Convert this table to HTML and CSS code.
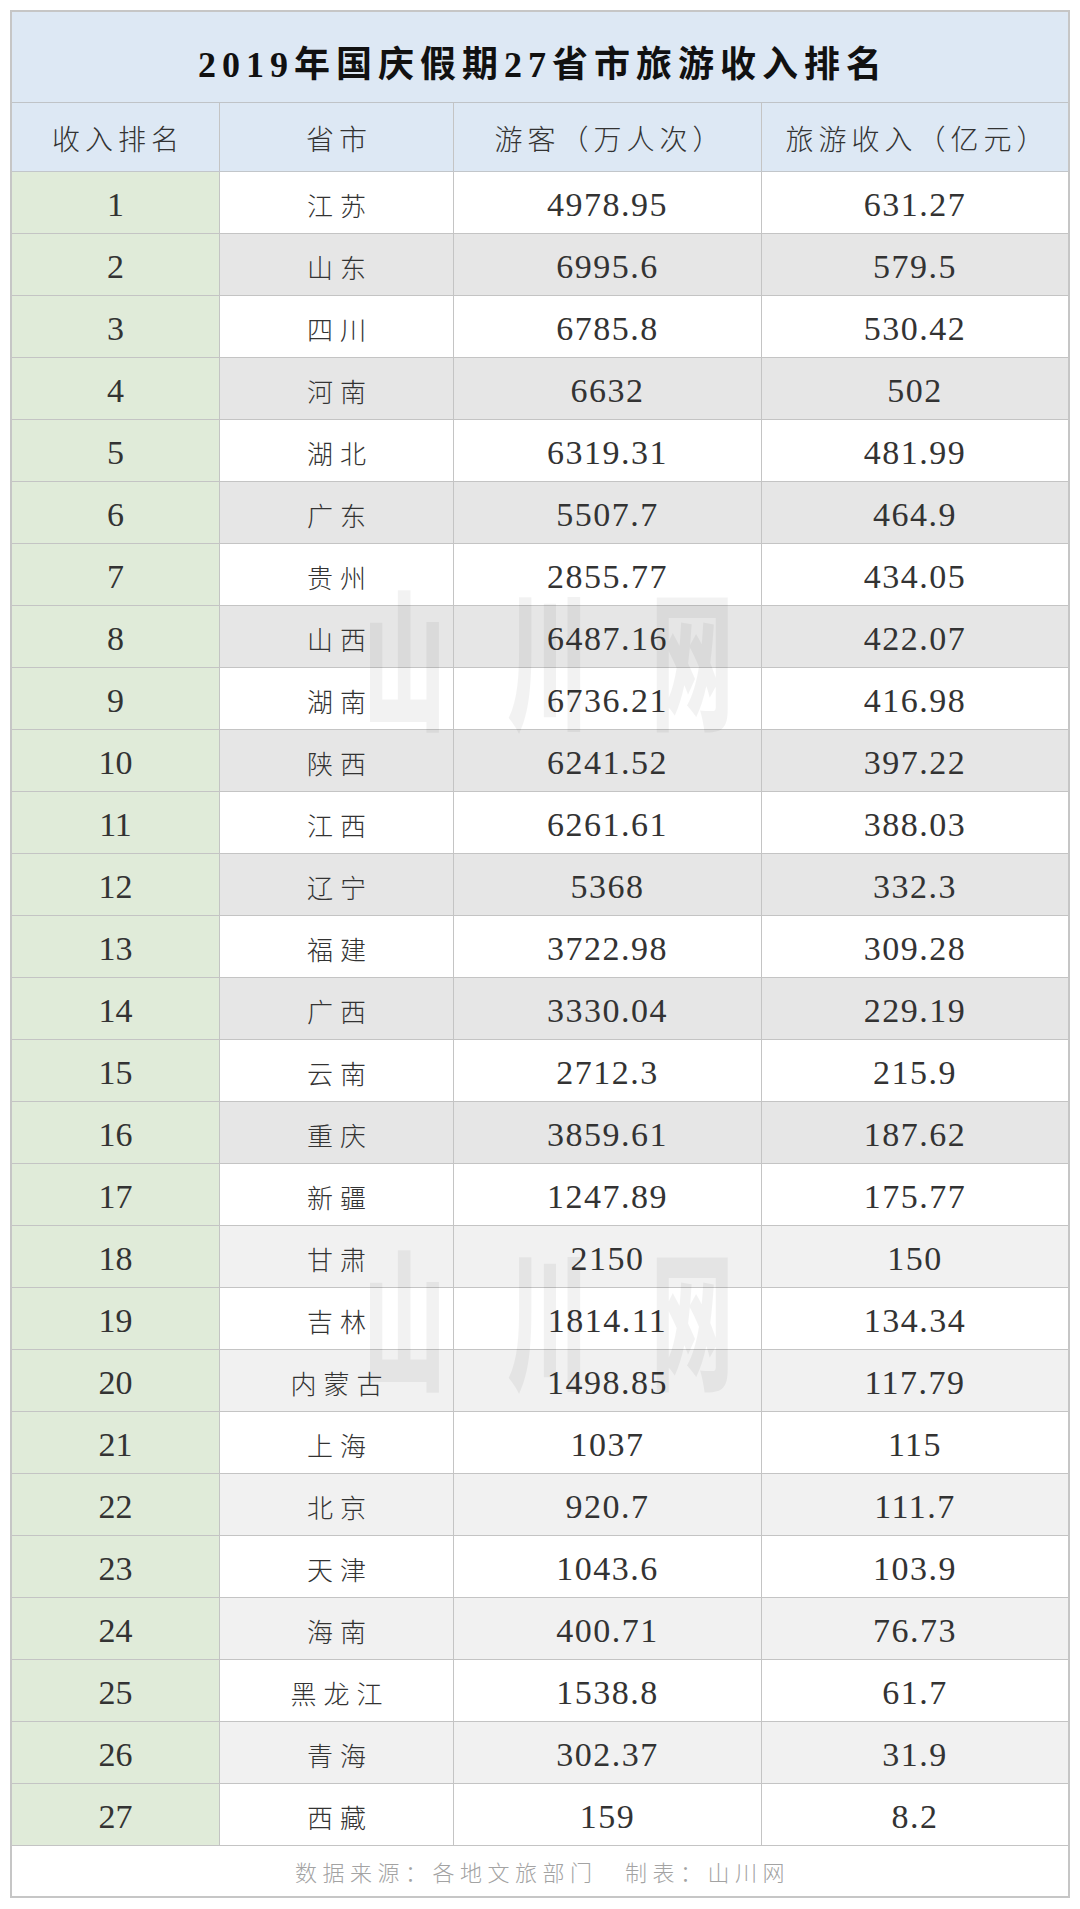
FILE: index.html
```html
<!DOCTYPE html>
<html lang="zh-CN">
<head>
<meta charset="utf-8">
<title>2019年国庆假期27省市旅游收入排名</title>
<link rel="stylesheet" href="styles.css">
</head>
<body>
<div class="sheet">
  <div class="title">2019年国庆假期27省市旅游收入排名</div>
  <div class="row head">
    <div class="cell">收入排名</div>
    <div class="cell">省市</div>
    <div class="cell">游客（万人次）</div>
    <div class="cell">旅游收入（亿元）</div>
  </div>
  <div class="row"><div class="cell rank">1</div><div class="cell prov">江苏</div><div class="cell num">4978.95</div><div class="cell num">631.27</div></div>
  <div class="row dark"><div class="cell rank">2</div><div class="cell prov">山东</div><div class="cell num">6995.6</div><div class="cell num">579.5</div></div>
  <div class="row"><div class="cell rank">3</div><div class="cell prov">四川</div><div class="cell num">6785.8</div><div class="cell num">530.42</div></div>
  <div class="row dark"><div class="cell rank">4</div><div class="cell prov">河南</div><div class="cell num">6632</div><div class="cell num">502</div></div>
  <div class="row"><div class="cell rank">5</div><div class="cell prov">湖北</div><div class="cell num">6319.31</div><div class="cell num">481.99</div></div>
  <div class="row dark"><div class="cell rank">6</div><div class="cell prov">广东</div><div class="cell num">5507.7</div><div class="cell num">464.9</div></div>
  <div class="row"><div class="cell rank">7</div><div class="cell prov">贵州</div><div class="cell num">2855.77</div><div class="cell num">434.05</div></div>
  <div class="row dark"><div class="cell rank">8</div><div class="cell prov">山西</div><div class="cell num">6487.16</div><div class="cell num">422.07</div></div>
  <div class="row"><div class="cell rank">9</div><div class="cell prov">湖南</div><div class="cell num">6736.21</div><div class="cell num">416.98</div></div>
  <div class="row dark"><div class="cell rank">10</div><div class="cell prov">陕西</div><div class="cell num">6241.52</div><div class="cell num">397.22</div></div>
  <div class="row"><div class="cell rank">11</div><div class="cell prov">江西</div><div class="cell num">6261.61</div><div class="cell num">388.03</div></div>
  <div class="row dark"><div class="cell rank">12</div><div class="cell prov">辽宁</div><div class="cell num">5368</div><div class="cell num">332.3</div></div>
  <div class="row"><div class="cell rank">13</div><div class="cell prov">福建</div><div class="cell num">3722.98</div><div class="cell num">309.28</div></div>
  <div class="row dark"><div class="cell rank">14</div><div class="cell prov">广西</div><div class="cell num">3330.04</div><div class="cell num">229.19</div></div>
  <div class="row"><div class="cell rank">15</div><div class="cell prov">云南</div><div class="cell num">2712.3</div><div class="cell num">215.9</div></div>
  <div class="row dark"><div class="cell rank">16</div><div class="cell prov">重庆</div><div class="cell num">3859.61</div><div class="cell num">187.62</div></div>
  <div class="row"><div class="cell rank">17</div><div class="cell prov">新疆</div><div class="cell num">1247.89</div><div class="cell num">175.77</div></div>
  <div class="row light"><div class="cell rank">18</div><div class="cell prov">甘肃</div><div class="cell num">2150</div><div class="cell num">150</div></div>
  <div class="row"><div class="cell rank">19</div><div class="cell prov">吉林</div><div class="cell num">1814.11</div><div class="cell num">134.34</div></div>
  <div class="row light"><div class="cell rank">20</div><div class="cell prov">内蒙古</div><div class="cell num">1498.85</div><div class="cell num">117.79</div></div>
  <div class="row"><div class="cell rank">21</div><div class="cell prov">上海</div><div class="cell num">1037</div><div class="cell num">115</div></div>
  <div class="row light"><div class="cell rank">22</div><div class="cell prov">北京</div><div class="cell num">920.7</div><div class="cell num">111.7</div></div>
  <div class="row"><div class="cell rank">23</div><div class="cell prov">天津</div><div class="cell num">1043.6</div><div class="cell num">103.9</div></div>
  <div class="row light"><div class="cell rank">24</div><div class="cell prov">海南</div><div class="cell num">400.71</div><div class="cell num">76.73</div></div>
  <div class="row"><div class="cell rank">25</div><div class="cell prov">黑龙江</div><div class="cell num">1538.8</div><div class="cell num">61.7</div></div>
  <div class="row light"><div class="cell rank">26</div><div class="cell prov">青海</div><div class="cell num">302.37</div><div class="cell num">31.9</div></div>
  <div class="row"><div class="cell rank">27</div><div class="cell prov">西藏</div><div class="cell num">159</div><div class="cell num">8.2</div></div>
  <div class="footer">数据来源：各地文旅部门　制表：山川网</div>

  <div class="watermark wm1"><span>山</span><span>川</span><span>网</span></div>
  <div class="watermark wm2"><span>山</span><span>川</span><span>网</span></div>
</div>
</body>
</html>
```

FILE: styles.css
```css
html, body {
  margin: 0;
  padding: 0;
  background: #ffffff;
}

body {
  font-family: "Liberation Serif", "Noto Sans CJK SC", serif;
  color: #2a2a2a;
}

.sheet {
  position: relative;
  width: 1056px;
  margin: 10px 0 0 10px;
  border: 2px solid #c6c6c6;
  background: #ffffff;
  overflow: hidden;
}

.title {
  display: flex;
  align-items: center;
  justify-content: center;
  padding-top: 8px;
  padding-left: 6px;
  box-sizing: border-box;
  height: 91px;
  border-bottom: 1px solid #bfc3c7;
  background: #dde8f4;
  font-size: 36px;
  font-weight: 700;
  letter-spacing: 6px;
  color: #111;
}

.row {
  display: grid;
  grid-template-columns: 208px 234px 308px 306px;
  height: 62px;
  border-bottom: 1px solid #c4c4c4;
  box-sizing: border-box;
  background: #ffffff;
}

.row.head {
  height: 69px;
  background: #dde8f4;
  border-bottom-color: #c2c6ca;
}

.row.dark { background: #e6e6e6; }
.row.light { background: #f1f1f1; }

.cell {
  display: flex;
  align-items: center;
  justify-content: center;
  border-right: 1px solid #c4c4c4;
  padding-top: 4px;
  box-sizing: border-box;
}

.cell:last-child { border-right: none; }

.row.head .cell {
  font-family: "Noto Sans CJK SC", sans-serif;
  font-size: 28px;
  font-weight: 300;
  letter-spacing: 5px;
  padding-left: 5px;
  padding-top: 2px;
  color: #333;
}

.cell.rank {
  background: #e0ebd9;
  font-size: 34px;
  color: #333;
}

.cell.prov {
  font-family: "Noto Sans CJK SC", sans-serif;
  font-size: 26px;
  font-weight: 300;
  letter-spacing: 7px;
  padding-left: 7px;
  color: #333;
}

.cell.num {
  font-size: 34px;
  letter-spacing: 1.5px;
  color: #333;
}

.footer {
  height: 50px;
  display: flex;
  align-items: center;
  justify-content: center;
  font-family: "Noto Sans CJK SC", sans-serif;
  font-size: 22px;
  font-weight: 300;
  letter-spacing: 5.5px;
  padding-left: 5px;
  color: #a3a3a3;
}

.watermark {
  position: absolute;
  left: 351px;
  display: flex;
  gap: 64px;
  pointer-events: none;
  font-family: "Noto Sans CJK SC", sans-serif;
  font-weight: 900;
  font-size: 150px;
  line-height: 150px;
  color: rgba(0, 0, 0, 0.05);
}

.watermark span {
  display: block;
  width: 80px;
  overflow: visible;
  white-space: nowrap;
  transform: scaleX(0.55);
  transform-origin: 0 0;
}

.wm1 { top: 566px; }
.wm2 { top: 1226px; }
```
